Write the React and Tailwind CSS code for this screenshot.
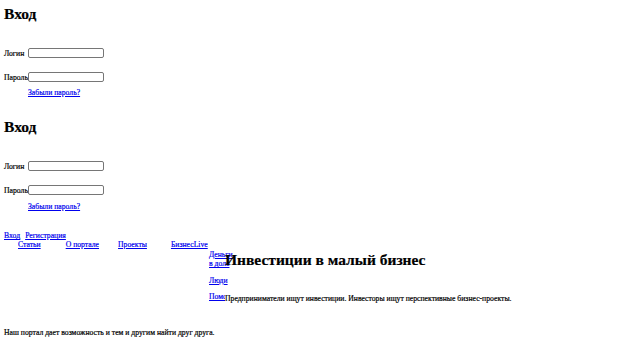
import React from 'react';

const LoginBlock = ({ first }) => (
    <div className={first ? 'pt-[5px]' : 'mt-[21px]'}>
        <h1 className="text-[15.5px] leading-[18px] font-bold">Вход</h1>
        <div className="mt-[25px] flex items-center h-[10px]">
            <label className="w-[24px]">Логин</label>
            <input type="text" className="w-[76px] h-[10px] bg-white border border-[#767676] rounded-[2px]" />
        </div>
        <div className="mt-[14px] flex items-center h-[10px]">
            <label className="w-[24px]">Пароль</label>
            <input type="password" className="w-[76px] h-[10px] bg-white border border-[#767676] rounded-[2px]" />
        </div>
        <div className={first ? 'mt-[6px] ml-[24px]' : 'mt-[7px] ml-[24px]'}>
            <a href="#" className="text-[#0000ee] underline">Забыли пароль?</a>
        </div>
    </div>
);

const App = () => {
    return (
        <div className="min-h-[343px] bg-white text-black px-[4px] text-[7.7px] leading-[9px] [-webkit-text-stroke:0.2px] font-['Liberation_Serif',serif]">
            <LoginBlock first />
            <LoginBlock />

            <div className="mt-[20px] flex gap-[5px]">
                <a href="#" className="text-[#0000ee] underline">Вход</a>
                <a href="#" className="text-[#0000ee] underline">Регистрация</a>
            </div>

            <nav className="flex">
                <a href="#" className="ml-[14px] text-[#0000ee] underline">Статьи</a>
                <a href="#" className="ml-[25px] text-[#0000ee] underline">О портале</a>
                <a href="#" className="ml-[19px] text-[#0000ee] underline">Проекты</a>
                <a href="#" className="ml-[24px] text-[#0000ee] underline">БизнесLive</a>
            </nav>

            <div className="flex">
                <ul className="ml-[205px] mt-[1px] w-[16px] shrink-0 flex flex-col gap-[7.5px]">
                    <li className="w-[26px]"><a href="#" className="text-[#0000ee] underline">Деньги в доле</a></li>
                    <li><a href="#" className="text-[#0000ee] underline">Люди</a></li>
                    <li><a href="#" className="text-[#0000ee] underline">Помощь</a></li>
                </ul>
                <div className="relative z-10 mt-[2px]">
                    <h1 className="text-[15.5px] leading-[18px] font-bold">Инвестиции в малый бизнес</h1>
                    <p className="mt-[25px] bg-white">Предприниматели ищут инвестиции. Инвесторы ищут перспективные бизнес-проекты.</p>
                </div>
            </div>

            <p className="mt-[25px]">Наш портал дает возможность и тем и другим найти друг друга.</p>
        </div>
    );
};

export default App;
